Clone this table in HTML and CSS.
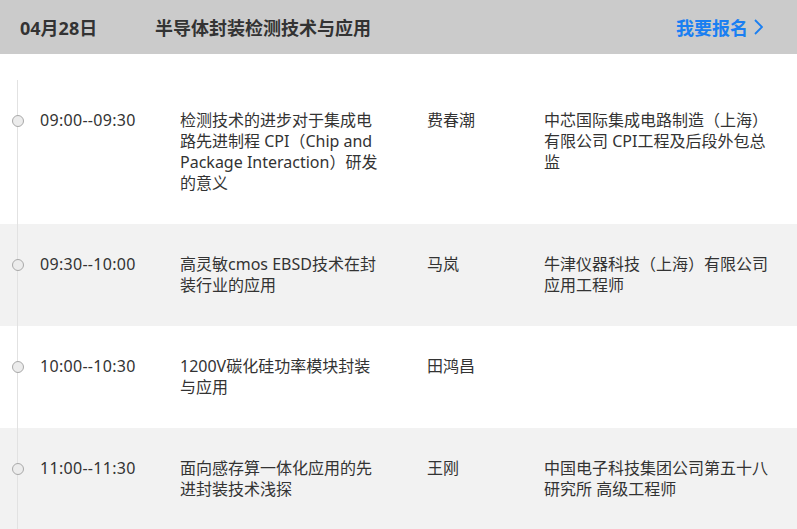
FILE: index.html
```html
<!DOCTYPE html>
<html lang="zh-CN">
<head>
<meta charset="utf-8">
<title>半导体封装检测技术与应用</title>
<link rel="stylesheet" href="styles.css">
</head>
<body>
<header class="day-header">
  <span class="day-date">04月28日</span>
  <span class="day-title">半导体封装检测技术与应用</span>
  <a class="signup" href="#">我要报名<svg class="chev" width="9" height="16" viewBox="0 0 9 16"><path d="M1 1 L8 8 L1 15" fill="none" stroke="currentColor" stroke-width="1.8"/></svg></a>
</header>
<div class="schedule">
  <div class="row">
    <span class="dot"></span>
    <div class="time">09:00--09:30</div>
    <div class="topic">检测技术的进步对于集成电路先进制程 CPI（Chip and Package Interaction）研发的意义</div>
    <div class="speaker">费春潮</div>
    <div class="company">中芯国际集成电路制造（上海）有限公司 CPI工程及后段外包总监</div>
  </div>
  <div class="row alt">
    <span class="dot"></span>
    <div class="time">09:30--10:00</div>
    <div class="topic">高灵敏cmos EBSD技术在封装行业的应用</div>
    <div class="speaker">马岚</div>
    <div class="company">牛津仪器科技（上海）有限公司应用工程师</div>
  </div>
  <div class="row">
    <span class="dot"></span>
    <div class="time">10:00--10:30</div>
    <div class="topic">1200V碳化硅功率模块封装与应用</div>
    <div class="speaker">田鸿昌</div>
    <div class="company"></div>
  </div>
  <div class="row alt">
    <span class="dot"></span>
    <div class="time">11:00--11:30</div>
    <div class="topic">面向感存算一体化应用的先进封装技术浅探</div>
    <div class="speaker">王刚</div>
    <div class="company">中国电子科技集团公司第五十八研究所 高级工程师</div>
  </div>
</div>
</body>
</html>
```

FILE: styles.css
```css
html, body {
  margin: 0;
  padding: 0;
  background: #fff;
}
body {
  font-family: "Noto Sans", "Noto Sans CJK SC", sans-serif;
  color: #333;
  overflow: hidden;
}
.day-header {
  height: 54px;
  background: #cbcbcb;
  display: flex;
  align-items: center;
  padding: 0 34px 0 20px;
  font-size: 18px;
  font-weight: bold;
  color: #333;
}
.day-date {
  width: 135px;
  flex: none;
}
.day-title {
  flex: 1;
}
.signup {
  color: #1a7ff2;
  text-decoration: none;
  display: flex;
  align-items: center;
  gap: 6px;
}
.chev {
  display: block;
}
.schedule {
  margin-top: 26px;
  position: relative;
}
.schedule::before {
  content: "";
  position: absolute;
  left: 17px;
  top: 0;
  bottom: 0;
  width: 1px;
  background: #e2e2e2;
  z-index: 1;
}
.row {
  position: relative;
  display: grid;
  grid-template-columns: 140px 247px 117px 235px;
  padding: 30px 0 30px 40px;
  font-size: 16px;
  line-height: 21px;
}
.row.alt {
  background: #f2f2f2;
}
.time {
  letter-spacing: 0.3px;
}
.dot {
  position: absolute;
  left: 12px;
  top: 35px;
  width: 10px;
  height: 10px;
  border: 1px solid #a9a9a9;
  border-radius: 50%;
  background: #ececec;
  z-index: 2;
}
.topic {
  max-width: 200px;
}
```
